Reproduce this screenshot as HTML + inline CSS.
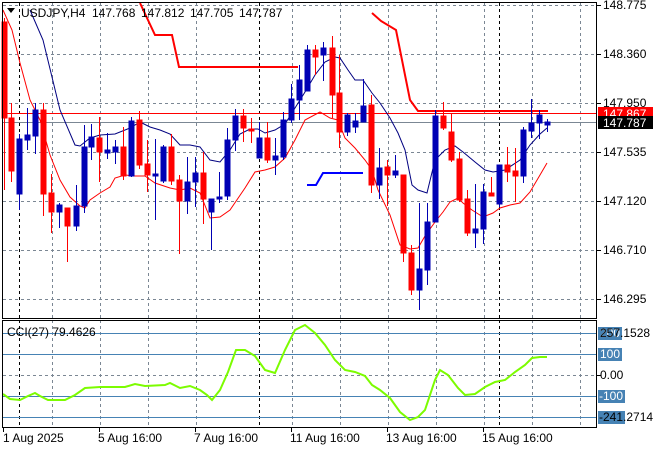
<!DOCTYPE html>
<html><head><meta charset="utf-8"><style>
html,body{margin:0;padding:0;background:#fff;}
svg{display:block;font-family:"Liberation Sans",sans-serif;font-size:12px;}
</style></head><body>
<svg width="660" height="450" viewBox="0 0 660 450" xmlns="http://www.w3.org/2000/svg">
<rect width="660" height="450" fill="#fff"/>
<g stroke="#7b8794" stroke-width="1" stroke-dasharray="3,3" fill="none">
<path d="M3 5.5H596M3 54.5H596M3 103.5H596M3 152.5H596M3 201.5H596M3 250.5H596M3 299.5H596"/>
<path d="M52.5 3V318M100.5 3V318M148.5 3V318M196.5 3V318M292.5 3V318M340.5 3V318M388.5 3V318M436.5 3V318M484.5 3V318M532.5 3V318M580.5 3V318"/>
<path d="M52.5 320V427M100.5 320V427M148.5 320V427M196.5 320V427M292.5 320V427M340.5 320V427M388.5 320V427M436.5 320V427M484.5 320V427M532.5 320V427M580.5 320V427"/>
<path d="M3 375.5H596"/>
</g>
<g stroke="#000" stroke-dasharray="3,3"><path d="M19.5 3V318M259.5 3V318M499.5 3V318M19.5 320V427M259.5 320V427M499.5 320V427"/></g>
<path d="M3 113.5H596" stroke="#ff0000"/>
<path d="M3 122.5H596" stroke="#7b8794"/>
<path d="M140 3L155 35H172L179 67H298" stroke="#ff0000" stroke-width="2" fill="none"/>
<path d="M372 13L381 21L396 30L410 100L418 111H548" stroke="#ff0000" stroke-width="2" fill="none"/>
<path d="M307 185H316L323 173H363" stroke="#0000ff" stroke-width="2" fill="none"/>
<polyline fill="none" stroke="#000080" stroke-width="1" points="30,10 43,40 60,110 75,145 80,146 90,138 100,135 115,134 130,128 140,122 150,127 160,130 170,134 180,145 190,145 200,147 210,160 220,162 230,150 240,134 250,129 258,129 265,133 275,130 285,124 295,108 305,92 315,75 325,62 335,57 340,58 348,70 355,80 363,80 372,93 380,103 390,118 398,133 405,150 412,185 418,190 427,193 435,160 445,150 455,146 463,152 475,162 485,170 493,172 505,170 520,160 530,145 540,134 547,128"/>
<polyline fill="none" stroke="#ff0000" stroke-width="1" points="3,10 12,30 20,63 30,100 35,110 40,120 50,155 60,180 70,197 80,206 85,208 90,200 100,193 110,187 115,178 125,175 135,176 145,176 155,183 170,188 180,190 190,188 200,193 210,218 220,217 230,210 245,188 255,172 265,170 275,167 285,158 295,140 305,120 320,112 330,118 338,120 345,138 355,148 365,160 372,170 378,190 390,215 400,245 410,249 418,248 425,236 435,222 443,212 450,202 458,198 463,203 472,210 483,217 493,213 500,208 510,205 520,203 530,192 540,175 547,163"/>
<g fill="#ff0000" stroke="#ff0000">
<line x1="4.5" y1="18" x2="4.5" y2="190"/><rect x="2" y="22" width="5" height="96"/>
<line x1="11.5" y1="103" x2="11.5" y2="182"/><rect x="9" y="118" width="5" height="53"/>
<line x1="43.5" y1="103" x2="43.5" y2="216"/><rect x="41" y="110" width="5" height="84"/>
<line x1="51.5" y1="174" x2="51.5" y2="233"/><rect x="49" y="193" width="5" height="19"/>
<line x1="67.5" y1="208" x2="67.5" y2="262"/><rect x="65" y="208" width="5" height="18"/>
<line x1="99.5" y1="117" x2="99.5" y2="182"/><rect x="97" y="138" width="5" height="14"/>
<line x1="123.5" y1="127" x2="123.5" y2="180"/><rect x="121" y="147" width="5" height="29"/>
<line x1="139.5" y1="111" x2="139.5" y2="169"/><rect x="137" y="120" width="5" height="45"/>
<line x1="147.5" y1="140" x2="147.5" y2="192"/><rect x="145" y="164" width="5" height="11"/>
<line x1="171.5" y1="134" x2="171.5" y2="185"/><rect x="169" y="147" width="5" height="34"/>
<line x1="179.5" y1="175" x2="179.5" y2="254"/><rect x="177" y="180" width="5" height="21"/>
<line x1="203.5" y1="152" x2="203.5" y2="224"/><rect x="201" y="173" width="5" height="26"/>
<line x1="243.5" y1="109" x2="243.5" y2="142"/><rect x="241" y="116" width="5" height="12"/>
<line x1="251.5" y1="118" x2="251.5" y2="143"/><rect x="249" y="129" width="5" height="2"/>
<line x1="267.5" y1="122" x2="267.5" y2="163"/><rect x="265" y="138" width="5" height="22"/>
<line x1="315.5" y1="45" x2="315.5" y2="75"/><rect x="313" y="50" width="5" height="7"/>
<line x1="332.5" y1="36" x2="332.5" y2="118"/><rect x="330" y="48" width="5" height="47"/>
<line x1="339.5" y1="55" x2="339.5" y2="148"/><rect x="337" y="93" width="5" height="39"/>
<line x1="371.5" y1="95" x2="371.5" y2="193"/><rect x="369" y="105" width="5" height="80"/>
<line x1="387.5" y1="160" x2="387.5" y2="206"/><rect x="385" y="167" width="5" height="8"/>
<line x1="403.5" y1="175" x2="403.5" y2="262"/><rect x="401" y="175" width="5" height="78"/>
<line x1="411.5" y1="245" x2="411.5" y2="295"/><rect x="409" y="253" width="5" height="37"/>
<line x1="443.5" y1="102" x2="443.5" y2="130"/><rect x="441" y="116" width="5" height="12"/>
<line x1="451.5" y1="114" x2="451.5" y2="162"/><rect x="449" y="132" width="5" height="28"/>
<line x1="459.5" y1="152" x2="459.5" y2="202"/><rect x="457" y="159" width="5" height="41"/>
<line x1="467.5" y1="190" x2="467.5" y2="236"/><rect x="465" y="199" width="5" height="34"/>
<line x1="491.5" y1="177" x2="491.5" y2="196"/><rect x="489" y="193" width="5" height="3"/>
<line x1="507.5" y1="147" x2="507.5" y2="182"/><rect x="505" y="165" width="5" height="7"/>
<line x1="515.5" y1="148" x2="515.5" y2="202"/><rect x="513" y="171" width="5" height="5"/>
</g>
<g fill="#0000b4" stroke="#0000b4">
<line x1="19.5" y1="134" x2="19.5" y2="210"/><rect x="17" y="139" width="5" height="55"/>
<line x1="27.5" y1="108" x2="27.5" y2="150"/><rect x="25" y="135" width="5" height="5"/>
<line x1="35.5" y1="103" x2="35.5" y2="154"/><rect x="33" y="110" width="5" height="26"/>
<line x1="59.5" y1="203" x2="59.5" y2="228"/><rect x="57" y="205" width="5" height="7"/>
<line x1="76.5" y1="185" x2="76.5" y2="231"/><rect x="74" y="206" width="5" height="20"/>
<line x1="84.5" y1="125" x2="84.5" y2="213"/><rect x="82" y="147" width="5" height="59"/>
<line x1="91.5" y1="124" x2="91.5" y2="160"/><rect x="89" y="137" width="5" height="10"/>
<line x1="107.5" y1="133" x2="107.5" y2="159"/><rect x="105" y="150" width="5" height="3"/>
<line x1="115.5" y1="140" x2="115.5" y2="164"/><rect x="113" y="147" width="5" height="5"/>
<line x1="131.5" y1="117" x2="131.5" y2="177"/><rect x="129" y="121" width="5" height="55"/>
<line x1="155.5" y1="139" x2="155.5" y2="220"/><rect x="153" y="174" width="5" height="2"/>
<line x1="163.5" y1="145" x2="163.5" y2="183"/><rect x="161" y="147" width="5" height="34"/>
<line x1="187.5" y1="157" x2="187.5" y2="214"/><rect x="185" y="182" width="5" height="19"/>
<line x1="195.5" y1="157" x2="195.5" y2="207"/><rect x="193" y="173" width="5" height="9"/>
<line x1="211.5" y1="199" x2="211.5" y2="250"/><rect x="209" y="199" width="5" height="13"/>
<line x1="219.5" y1="172" x2="219.5" y2="203"/><rect x="217" y="197" width="5" height="2"/>
<line x1="227.5" y1="128" x2="227.5" y2="200"/><rect x="225" y="140" width="5" height="56"/>
<line x1="235.5" y1="109" x2="235.5" y2="151"/><rect x="233" y="116" width="5" height="24"/>
<line x1="259.5" y1="122" x2="259.5" y2="158"/><rect x="257" y="138" width="5" height="20"/>
<line x1="275.5" y1="138" x2="275.5" y2="175"/><rect x="273" y="156" width="5" height="4"/>
<line x1="283.5" y1="112" x2="283.5" y2="160"/><rect x="281" y="120" width="5" height="37"/>
<line x1="291.5" y1="84" x2="291.5" y2="123"/><rect x="289" y="99" width="5" height="21"/>
<line x1="299.5" y1="65" x2="299.5" y2="120"/><rect x="297" y="80" width="5" height="20"/>
<line x1="307.5" y1="45" x2="307.5" y2="91"/><rect x="305" y="50" width="5" height="41"/>
<line x1="323.5" y1="42" x2="323.5" y2="81"/><rect x="321" y="48" width="5" height="7"/>
<line x1="347.5" y1="113" x2="347.5" y2="136"/><rect x="345" y="115" width="5" height="17"/>
<line x1="355.5" y1="113" x2="355.5" y2="133"/><rect x="353" y="121" width="5" height="6"/>
<line x1="363.5" y1="79" x2="363.5" y2="122"/><rect x="361" y="106" width="5" height="16"/>
<line x1="379.5" y1="148" x2="379.5" y2="199"/><rect x="377" y="168" width="5" height="17"/>
<line x1="395.5" y1="155" x2="395.5" y2="178"/><rect x="393" y="171" width="5" height="4"/>
<line x1="419.5" y1="203" x2="419.5" y2="310"/><rect x="417" y="269" width="5" height="21"/>
<line x1="427.5" y1="203" x2="427.5" y2="285"/><rect x="425" y="222" width="5" height="48"/>
<line x1="435.5" y1="110" x2="435.5" y2="222"/><rect x="433" y="116" width="5" height="106"/>
<line x1="475.5" y1="184" x2="475.5" y2="248"/><rect x="473" y="229" width="5" height="4"/>
<line x1="483.5" y1="184" x2="483.5" y2="244"/><rect x="481" y="192" width="5" height="37"/>
<line x1="499.5" y1="165" x2="499.5" y2="207"/><rect x="497" y="165" width="5" height="39"/>
<line x1="523.5" y1="127" x2="523.5" y2="183"/><rect x="521" y="130" width="5" height="46"/>
<line x1="531.5" y1="99" x2="531.5" y2="138"/><rect x="529" y="123" width="5" height="8"/>
<line x1="539.5" y1="110" x2="539.5" y2="139"/><rect x="537" y="115" width="5" height="8"/>
<line x1="547.5" y1="119" x2="547.5" y2="132"/><rect x="545" y="122" width="5" height="3"/>
</g>
<g stroke="#4682b4"><path d="M3 333.5H596M3 354.5H596M3 396.5H596M3 417.5H596"/></g>
<polyline fill="none" stroke="#7cfc00" stroke-width="2" points="3,394 10,399 20,400 28,396 35,393 40,396 48,400 65,400 75,395 85,388 100,387 125,387 135,384 145,386 165,385 170,383 180,388 190,386 200,390 207,395 212,400 220,390 228,372 236,350 245,350 255,356 265,370 275,373 285,350 295,330 305,325 315,333 325,345 335,360 345,370 355,372 365,376 372,385 380,390 390,398 400,412 410,420 418,417 425,410 435,380 440,370 448,375 458,388 465,395 475,394 485,387 495,382 505,380 515,372 525,365 532,358 540,357 547,357"/>
<rect x="2.5" y="2.5" width="594" height="316" fill="none" stroke="#000"/>
<rect x="2.5" y="320.5" width="594" height="107" fill="none" stroke="#000"/>
<g stroke="#000"><path d="M597 5.5h4M597 54.5h4M597 103.5h4M597 152.5h4M597 201.5h4M597 250.5h4M597 299.5h4M597 375.5h4"/>
<path d="M3.5 428v4M99.5 428v4M195.5 428v4M291.5 428v4M387.5 428v4M483.5 428v4"/></g>
<path d="M7 8h8l-4 5z" fill="#000"/>
<g fill="#000">
<text x="21" y="17">USDJPY,H4</text>
<text x="92" y="17">147.768</text>
<text x="141" y="17">147.812</text>
<text x="190" y="17">147.705</text>
<text x="239" y="17">147.787</text>
<text x="7" y="336">CCI(27) 79.4626</text>
<text x="603" y="9">148.775</text>
<text x="603" y="58">148.360</text>
<text x="603" y="107">147.950</text>
<text x="603" y="156">147.535</text>
<text x="603" y="205">147.120</text>
<text x="603" y="254">146.710</text>
<text x="603" y="303">146.295</text>
</g>
<rect x="598" y="107" width="55" height="12" fill="#ff0000"/>
<text x="603" y="118" fill="#fff">147.867</text>
<rect x="598" y="116" width="55" height="13" fill="#000"/>
<text x="603" y="127" fill="#fff">147.787</text>
<rect x="598" y="327" width="24" height="13" fill="#4682b4"/>
<text x="600" y="337" fill="#fff">200</text>
<text x="600" y="337" fill="#000">257.1528</text>
<rect x="598" y="348" width="24" height="13" fill="#4682b4"/>
<text x="600" y="358" fill="#fff">100</text>
<text x="600" y="379" fill="#000">0.00</text>
<rect x="598" y="390" width="27" height="13" fill="#4682b4"/>
<text x="599" y="400" fill="#fff">-100</text>
<rect x="598" y="411" width="27" height="13" fill="#4682b4"/>
<text x="599" y="421" fill="#000">-241.2714</text>
<g fill="#000">
<text x="3" y="442">1 Aug 2025</text>
<text x="98" y="442">5 Aug 16:00</text>
<text x="194" y="442">7 Aug 16:00</text>
<text x="290" y="442">11 Aug 16:00</text>
<text x="386" y="442">13 Aug 16:00</text>
<text x="482" y="442">15 Aug 16:00</text>
</g>
</svg>
</body></html>
